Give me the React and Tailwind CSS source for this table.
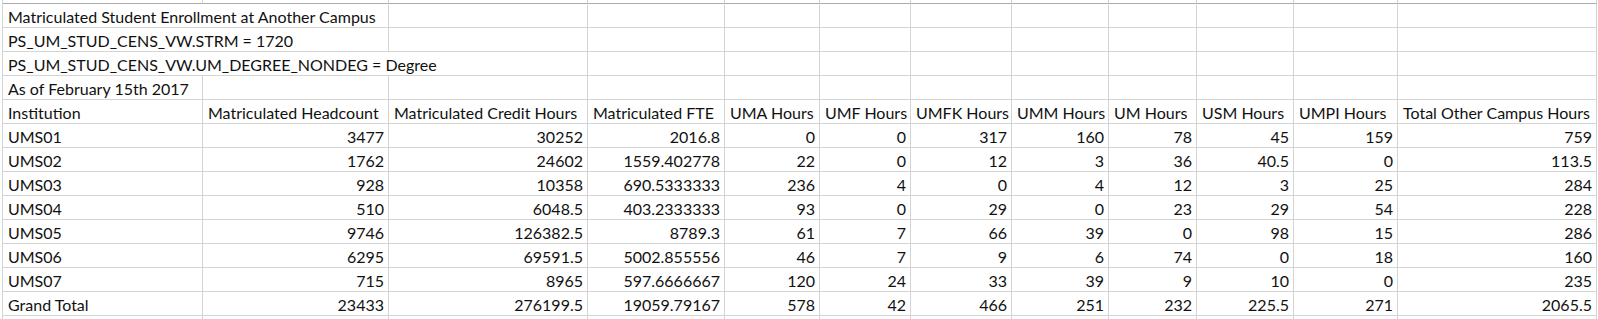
import React from "react";

const headers = [
  "Institution",
  "Matriculated Headcount",
  "Matriculated Credit Hours",
  "Matriculated FTE",
  "UMA Hours",
  "UMF Hours",
  "UMFK Hours",
  "UMM Hours",
  "UM Hours",
  "USM Hours",
  "UMPI Hours",
  "Total Other Campus Hours",
];

const rows = [
  ["UMS01", "3477", "30252", "2016.8", "0", "0", "317", "160", "78", "45", "159", "759"],
  ["UMS02", "1762", "24602", "1559.402778", "22", "0", "12", "3", "36", "40.5", "0", "113.5"],
  ["UMS03", "928", "10358", "690.5333333", "236", "4", "0", "4", "12", "3", "25", "284"],
  ["UMS04", "510", "6048.5", "403.2333333", "93", "0", "29", "0", "23", "29", "54", "228"],
  ["UMS05", "9746", "126382.5", "8789.3", "61", "7", "66", "39", "0", "98", "15", "286"],
  ["UMS06", "6295", "69591.5", "5002.855556", "46", "7", "9", "6", "74", "0", "18", "160"],
  ["UMS07", "715", "8965", "597.6666667", "120", "24", "33", "39", "9", "10", "0", "235"],
  ["Grand Total", "23433", "276199.5", "19059.79167", "578", "42", "466", "251", "232", "225.5", "271", "2065.5"],
];

const cell = "h-[24px] border-r border-b border-[#d4d4d4] whitespace-nowrap leading-[25px]";

function Blank() {
  return <div className={cell} />;
}

function TitleRow({ text, span }) {
  const spanCls = span === 3 ? "col-span-3" : span === 2 ? "col-span-2" : "col-span-1";
  return (
    <>
      <div className={`${cell} ${spanCls} pl-[5px]`}>{text}</div>
      {Array.from({ length: 12 - span }).map((_, i) => (
        <Blank key={i} />
      ))}
    </>
  );
}

export default function App() {
  return (
    <div className="w-[1598px] h-[319px] overflow-hidden bg-white">
      <div
        className="ml-[2px] grid grid-cols-[200px_186px_199px_137px_95px_91px_101px_97px_88px_97px_104px_199px] border-l border-[#d4d4d4] text-[16px] text-[#111]"
        style={{ fontFamily: "Lato, 'Open Sans', sans-serif" }}
      >
        {headers.map((_, i) => (
          <div key={i} className="h-[4px] border-r border-b border-r-[#d4d4d4] border-b-[#ababab]" />
        ))}

        <TitleRow text="Matriculated Student Enrollment at Another Campus" span={2} />
        <TitleRow text="PS_UM_STUD_CENS_VW.STRM = 1720" span={2} />
        <TitleRow text="PS_UM_STUD_CENS_VW.UM_DEGREE_NONDEG = Degree" span={3} />
        <TitleRow text="As of February 15th 2017" span={1} />

        {headers.map((h) => (
          <div key={h} className={`${cell} pl-[5px]`}>
            {h}
          </div>
        ))}

        {rows.map((r) =>
          r.map((v, i) => (
            <div key={r[0] + i} className={`${cell} ${i === 0 ? "pl-[5px]" : "text-right pr-[4px]"}`}>
              {v}
            </div>
          ))
        )}

        {headers.map((_, i) => (
          <Blank key={"tail" + i} />
        ))}
      </div>
    </div>
  );
}
